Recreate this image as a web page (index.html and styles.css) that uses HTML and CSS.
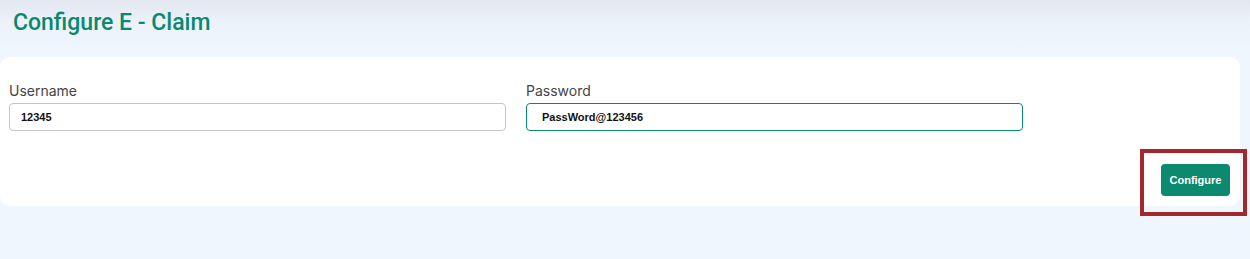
FILE: index.html
```html
<!DOCTYPE html>
<html lang="en">
<head>
  <meta charset="UTF-8">
  <title>Configure E - Claim</title>
  <link rel="stylesheet" href="styles.css">
</head>
<body>

  <div class="page">
    <h1 class="title">Configure E - Claim</h1>

    <div class="card">
      <div class="fields">
        <div class="field">
          <label for="username">Username</label>
          <input type="text" id="username" class="input" value="12345" />
        </div>
        <div class="field">
          <label for="password">Password</label>
          <input type="text" id="password" class="input focused" value="PassWord@123456" />
        </div>
      </div>

      <div class="actions">
        <button class="configure">Configure</button>
      </div>
    </div>

    <!-- annotation box round the button -->
    <div class="highlight"></div>
  </div>

</body>
</html>
```

FILE: styles.css
```css
body {
  margin: 0;
  background: #eff6fe;
  font-family: Inter, "Noto Sans", sans-serif;
}
.page {
  position: relative;
  height: 259px;
  background: linear-gradient(to bottom, #e3e7ef 0px, #ecf2fa 22px, #eff6fe 52px);
  overflow: hidden;
}
.title {
  margin: 0;
  padding: 9px 0 0 13px;
  height: 48px;
  box-sizing: border-box;
  font-family: Roboto, sans-serif;
  font-weight: 500;
  font-size: 23px;
  color: #0b8870;
}
.card {
  margin-top: 9px;
  width: 1240px;
  height: 149px;
  box-sizing: border-box;
  background: #fff;
  border-radius: 10px;
  padding: 25px 10px 0 9px;
}
.fields {
  display: grid;
  grid-template-columns: 497px 497px;
  gap: 20px;
}
.field label {
  display: block;
  font-size: 14px;
  line-height: 18px;
  color: #444;
  margin-bottom: 3px;
}
.input {
  display: block;
  width: 100%;
  height: 28px;
  box-sizing: border-box;
  border: 1px solid #c4c4c4;
  border-radius: 4px;
  padding: 0 11px;
  font-family: "Liberation Sans", Arial, sans-serif;
  font-weight: bold;
  font-size: 11px;
  color: #111;
  outline: none;
}
.input.focused {
  border-color: #0b8870;
  padding-left: 15px;
}
.actions {
  display: flex;
  justify-content: flex-end;
  margin-top: 33px;
}
.configure {
  width: 69px;
  height: 32px;
  border: none;
  border-radius: 4px;
  background: #0b8a6f;
  color: #fff;
  font-family: "Liberation Sans", Arial, sans-serif;
  font-weight: bold;
  font-size: 11px;
  cursor: pointer;
}
.highlight {
  position: absolute;
  left: 1140px;
  top: 149px;
  width: 107px;
  height: 67px;
  box-sizing: border-box;
  border: 4px solid #a4282b;
}
```
